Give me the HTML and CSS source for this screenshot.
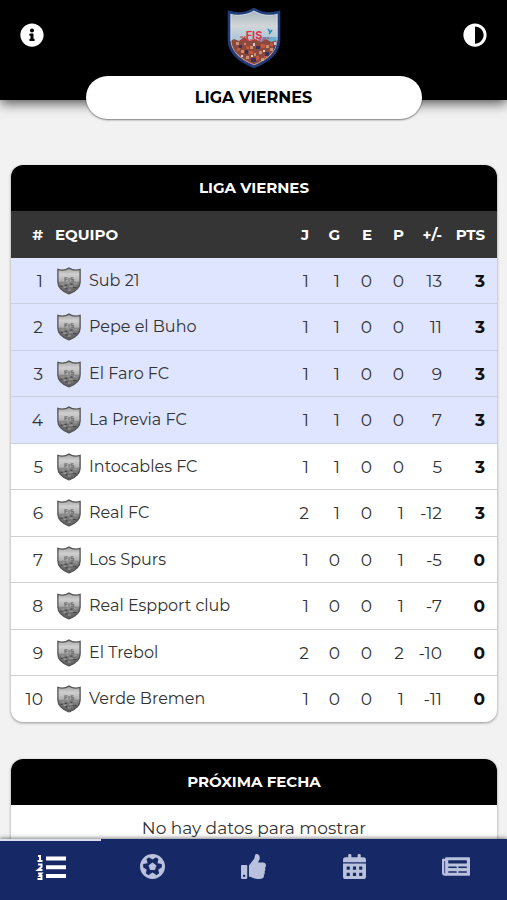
FILE: index.html
```html
<!DOCTYPE html>
<html lang="es">
<head>
<meta charset="utf-8">
<meta name="viewport" content="width=device-width, initial-scale=1">
<title>Liga Viernes</title>
<link rel="stylesheet" href="styles.css">
</head>
<body>
<svg class="defs" aria-hidden="true">
  <defs>
    <linearGradient id="sky" x1="0" y1="0" x2="0" y2="1">
      <stop offset="0" stop-color="#9fb1bb"/>
      <stop offset=".3" stop-color="#d0d5d8"/>
      <stop offset=".5" stop-color="#b0c9d6"/>
    </linearGradient>
    <linearGradient id="mono" x1="0" y1="0" x2="0" y2="1">
      <stop offset="0" stop-color="#a2a2a2"/>
      <stop offset=".25" stop-color="#cfcfcf"/>
      <stop offset=".5" stop-color="#b0b0b0"/>
      <stop offset=".56" stop-color="#858585"/>
      <stop offset="1" stop-color="#5c5c5c"/>
    </linearGradient>
    <clipPath id="shield-clip"><path d="M2 4Q16 8 27 1Q38 8 52 4V32C52 45 42 53 27 59C12 53 2 45 2 32Z"/></clipPath>
    <symbol id="crest" viewBox="0 0 54 60">
      <g clip-path="url(#shield-clip)">
        <path fill="url(#sky)" d="M0 0h54v60H0z"/>
        <path fill="#6aaed0" d="M32 29h20v5H32z"/>
        <path fill="#8c4a3c" d="M2 34l5-3 5 2 5-4 6 4 5-2 6 3 5-3 5 3 7-2v29H2z"/>
        <path fill="#3b2f5c" d="M2 36l5 6 4 8 7 8H2zM48 35l4-1v14l-8 8zM18 42h3v4h-3zM29 38h4v3h-4zM38 44h4v4h-4zM24 50h5v4h-5zM12 37h3v3h-3z"/>
        <path fill="#c98f74" d="M9 34h3v3H9zM14 42h3v3h-3zM23 38h3v3h-3zM32 43h3v3h-3zM39 37h3v3h-3zM19 48h3v3h-3zM34 50h3v3h-3zM43 40h3v3h-3zM27 45h2v3h-2zM17 35h2v2h-2z"/>
        <path fill="#c4583c" d="M19 38h3v3h-3zM34 36h4v4h-4zM22 43h4v3h-4zM29 48h3v4h-3zM10 40h3v3h-3zM37 48h3v2h-3zM43 35h3v3h-3z"/>
        <path fill="#d5cdd2" d="M26 35h2v3h-2zM36 42h2v2h-2zM24 47h2v2h-2zM47 34h2v3h-2zM14 47h2v2h-2z"/>
        <path stroke="#2987ba" stroke-width="1.500" fill="none" d="M41 21l2 3m2-2l-3 4"/>
        <path stroke="#d4324b" stroke-opacity=".7" stroke-width="1.500" fill="none" d="M13 29h6M36 30h6M15 32h24" stroke-dasharray="3 1"/>
      </g>
      <text class="crest-text" x="27" y="31" text-anchor="middle">FIS</text>
      <path fill="none" stroke="#dce1ec" stroke-opacity=".6" d="M4 6Q16 10 27 3Q38 10 50 6V32C50 44 40 51 27 57C14 51 4 44 4 32Z"/>
      <path fill="none" stroke="#213c7c" stroke-width="2.500" d="M2 4Q16 8 27 1Q38 8 52 4V32C52 45 42 53 27 59C12 53 2 45 2 32Z"/>
    </symbol>
    <symbol id="crest-mono" viewBox="0 0 54 60">
      <path fill="url(#mono)" d="M2 4Q16 8 27 1Q38 8 52 4V32C52 45 42 53 27 59C12 53 2 45 2 32Z"/>
      <path fill="none" stroke="#777" stroke-width="3" d="M18 31v-8h6M18 27h5M27 23v8M37 23h-5v4h5v4h-6"/>
      <path fill="none" stroke="#979797" stroke-width="3" d="M10 37h7M22 35h5M38 36h7M15 44h5M27 42h8M24 50h7"/>
      <path fill="none" stroke="#484848" stroke-width="3" d="M8 42h5M17 40h6M30 37h5M36 45h8M19 48h5"/>
      <path fill="none" stroke="#555" stroke-width="3" d="M2 4Q16 8 27 1Q38 8 52 4V32C52 45 42 53 27 59C12 53 2 45 2 32Z"/>
    </symbol>
  </defs>
</svg>

<header class="topbar">
  <div class="topbar-row">
    <button class="icon-button" type="button" aria-label="Información">
      <svg viewBox="0 0 512 512"><path d="M256 8C119 8 8 119 8 256s111 248 248 248 248-111 248-248S393 8 256 8zm0 110c23 0 42 19 42 42s-19 42-42 42-42-19-42-42 19-42 42-42zm56 254c0 7-5 12-12 12h-88c-7 0-12-5-12-12v-24c0-7 5-12 12-12h12v-64h-12c-7 0-12-5-12-12v-24c0-7 5-12 12-12h64c7 0 12 5 12 12v100h12c7 0 12 5 12 12z"/></svg>
    </button>
    <svg class="logo" role="img" aria-label="FIS"><use href="#crest"/></svg>
    <button class="icon-button" type="button" aria-label="Cambiar contraste">
      <svg viewBox="0 0 512 512"><path d="M8 256c0 137 111 248 248 248s248-111 248-248S393 8 256 8 8 119 8 256zm248 184V72c102 0 184 82 184 184 0 102-82 184-184 184z"/></svg>
    </button>
  </div>
  <h1 class="pill">LIGA VIERNES</h1>
</header>

<main class="content">
  <section class="card">
    <h2 class="card-title">LIGA VIERNES</h2>
    <table class="standings">
      <thead>
        <tr><th class="rank">#</th><th class="team">EQUIPO</th><th class="played">J</th><th class="stat won">G</th><th class="stat">E</th><th class="stat">P</th><th class="diff">+/-</th><th class="points">PTS</th></tr>
      </thead>
      <tbody>
        <tr class="qualified"><td>1</td><td class="team"><span class="club"><svg class="badge" aria-hidden="true"><use href="#crest-mono"/></svg>Sub 21</span></td><td>1</td><td>1</td><td>0</td><td>0</td><td>13</td><td class="points">3</td></tr>
        <tr class="qualified"><td>2</td><td class="team"><span class="club"><svg class="badge" aria-hidden="true"><use href="#crest-mono"/></svg>Pepe el Buho</span></td><td>1</td><td>1</td><td>0</td><td>0</td><td>11</td><td class="points">3</td></tr>
        <tr class="qualified"><td>3</td><td class="team"><span class="club"><svg class="badge" aria-hidden="true"><use href="#crest-mono"/></svg>El Faro FC</span></td><td>1</td><td>1</td><td>0</td><td>0</td><td>9</td><td class="points">3</td></tr>
        <tr class="qualified"><td>4</td><td class="team"><span class="club"><svg class="badge" aria-hidden="true"><use href="#crest-mono"/></svg>La Previa FC</span></td><td>1</td><td>1</td><td>0</td><td>0</td><td>7</td><td class="points">3</td></tr>
        <tr><td>5</td><td class="team"><span class="club"><svg class="badge" aria-hidden="true"><use href="#crest-mono"/></svg>Intocables FC</span></td><td>1</td><td>1</td><td>0</td><td>0</td><td>5</td><td class="points">3</td></tr>
        <tr><td>6</td><td class="team"><span class="club"><svg class="badge" aria-hidden="true"><use href="#crest-mono"/></svg>Real FC</span></td><td>2</td><td>1</td><td>0</td><td>1</td><td>-12</td><td class="points">3</td></tr>
        <tr><td>7</td><td class="team"><span class="club"><svg class="badge" aria-hidden="true"><use href="#crest-mono"/></svg>Los Spurs</span></td><td>1</td><td>0</td><td>0</td><td>1</td><td>-5</td><td class="points">0</td></tr>
        <tr><td>8</td><td class="team"><span class="club"><svg class="badge" aria-hidden="true"><use href="#crest-mono"/></svg>Real Espport club</span></td><td>1</td><td>0</td><td>0</td><td>1</td><td>-7</td><td class="points">0</td></tr>
        <tr><td>9</td><td class="team"><span class="club"><svg class="badge" aria-hidden="true"><use href="#crest-mono"/></svg>El Trebol</span></td><td>2</td><td>0</td><td>0</td><td>2</td><td>-10</td><td class="points">0</td></tr>
        <tr><td>10</td><td class="team"><span class="club"><svg class="badge" aria-hidden="true"><use href="#crest-mono"/></svg>Verde Bremen</span></td><td>1</td><td>0</td><td>0</td><td>1</td><td>-11</td><td class="points">0</td></tr>
      </tbody>
    </table>
  </section>

  <section class="card">
    <h2 class="card-title">PRÓXIMA FECHA</h2>
    <p class="empty">No hay datos para mostrar</p>
  </section>
</main>

<nav class="tabs">
  <a class="tab active" href="#posiciones" aria-label="Posiciones">
    <svg class="list" viewBox="0 0 32 28">
      <path d="M11 3.500h20v4H11zM11 12.200h20v4H11zM11 21h20v4H11z"/>
      <path fill="none" stroke="currentColor" stroke-width="2" d="M3 3h2v5M2.500 8h5M3 11.500h3.500v2.500l-3.500 3h4.500M3 20.500h3.500l-2 2.500h2v3H2.500"/>
    </svg>
  </a>
  <a class="tab" href="#fixture" aria-label="Fixture">
    <svg viewBox="0 0 24 24">
      <circle cx="12" cy="12" r="10.800" fill="none" stroke="currentColor" stroke-width="2.400"/>
      <path fill-rule="evenodd" d="M12 1A11 11 0 1 0 12 23A11 11 0 1 0 12 1ZM12 5.300L8.500 3.200L6.300 4.800L7.200 8.800L3.100 9.500L3 12.700L6.500 15L5.500 18.500L8 20.500L12 17.800L16 20.500L18.500 18.500L17.500 15L21 12.700L20.900 9.500L16.800 8.800L17.700 4.800L15.500 3.200Z"/>
      <path d="M12 8.200l3.800 2.800-1.500 4.400H9.700L8.200 11z"/>
    </svg>
  </a>
  <a class="tab" href="#votar" aria-label="Votar">
    <svg viewBox="0 0 512 512"><path d="M104 224H24c-13.300 0-24 10.700-24 24v240c0 13.300 10.700 24 24 24h80c13.300 0 24-10.700 24-24V248c0-13.300-10.700-24-24-24zM64 472c-13.300 0-24-10.700-24-24s10.700-24 24-24 24 10.700 24 24-10.700 24-24 24zM384 81.500c0 42.400-26 66.200-33.300 94.500h101.700c33.400 0 59.400 27.700 59.600 58.100.1 18-7.600 37.200-19.400 49.200l-.1.100c9.800 23.300 8.200 56-9.300 79.500 8.700 25.900-.1 57.700-16.400 74.800 4.300 17.600 2.200 32.600-6.100 44.600-20.200 29-70.200 29.400-112.600 29.400h-2.800c-47.800 0-87-17.400-118.400-31.400-15.800-7-36.500-15.800-52.200-16-6.500-.1-11.800-5.500-11.800-12V238.500c0-3.200 1.300-6.300 3.600-8.500 39.200-38.800 56.100-79.900 88.300-112.100 14.700-14.700 20-36.900 25.200-58.300C284.400 41.200 293.600 0 312 0c24 0 72 8 72 81.500z"/></svg>
  </a>
  <a class="tab" href="#calendario" aria-label="Calendario">
    <svg viewBox="0 0 24 24"><path d="M1 8V5.500Q1 3 3.500 3H6V1Q6 0 7 0h1Q9 0 9 1v2h6V1Q15 0 16 0h1q1 0 1 1v2h2.500Q23 3 23 5.500V8z"/><path fill-rule="evenodd" d="M1 9h22v12.500Q23 24 20.500 24h-17Q1 24 1 21.500zM4.500 12v3h3v-3zM10.500 12v3h3v-3zM16.500 12v3h3v-3zM4.500 18v3h3v-3zM10.500 18v3h3v-3zM16.500 18v3h3v-3z"/></svg>
  </a>
  <a class="tab" href="#noticias" aria-label="Noticias">
    <svg class="news" viewBox="0 0 576 512"><path d="M552 64H88c-13.300 0-24 10.700-24 24v8H24c-13.300 0-24 10.700-24 24v272c0 30.900 25.100 56 56 56h496c13.300 0 24-10.700 24-24V88c0-13.300-10.700-24-24-24zM56 400c-4.400 0-8-3.600-8-8V144h16v248c0 4.400-3.600 8-8 8zm236-16H140c-6.600 0-12-5.400-12-12v-8c0-6.600 5.400-12 12-12h152c6.600 0 12 5.400 12 12v8c0 6.600-5.400 12-12 12zm208 0H348c-6.600 0-12-5.400-12-12v-8c0-6.600 5.400-12 12-12h152c6.600 0 12 5.400 12 12v8c0 6.600-5.400 12-12 12zM292 288H140c-6.600 0-12-5.400-12-12v-8c0-6.600 5.400-12 12-12h152c6.600 0 12 5.400 12 12v8c0 6.600-5.400 12-12 12zm208 0H348c-6.600 0-12-5.400-12-12v-8c0-6.600 5.400-12 12-12h152c6.600 0 12 5.400 12 12v8c0 6.600-5.400 12-12 12zm0-96H140c-6.600 0-12-5.400-12-12v-40c0-6.600 5.400-12 12-12h360c6.600 0 12 5.400 12 12v40c0 6.600-5.400 12-12 12z"/></svg>
  </a>
</nav>
</body>
</html>
```
FILE: styles.css
```css
* {
  box-sizing: border-box;
}

body {
  margin: 0;
  height: 100vh;
  display: flex;
  flex-direction: column;
  overflow: hidden;
  background: #f2f2f2;
  color: #333;
  font-family: Montserrat, Inter, sans-serif;
  font-size: 17px;
  line-height: 24px;
}

h1,
h2,
p {
  margin: 0;
}

.defs {
  position: absolute;
  width: 0;
  height: 0;
}

.crest-text {
  font-family: Inter, sans-serif;
  font-size: 11px;
  font-weight: 700;
  fill: #dc3548;
}

/* Header */

.topbar {
  flex: none;
  z-index: 1;
  height: 100px;
  background: #000;
  box-shadow: 0 3px 12px rgba(0, 0, 0, 0.7);
}

.topbar-row {
  display: flex;
  justify-content: space-between;
  align-items: flex-start;
  padding: 8px 20px 0;
}

.icon-button {
  margin: 15px 0 0;
  padding: 0;
  border: 0;
  background: none;
  color: #fff;
  width: 24px;
  height: 24px;
}

.icon-button svg {
  display: block;
  width: 24px;
  height: 24px;
  fill: currentColor;
}

.logo {
  width: 54px;
  height: 60px;
}

.pill {
  width: 336px;
  max-width: 80%;
  margin: 8px auto 0;
  border-radius: 22px;
  background: #fff;
  color: #000;
  box-shadow: 0 1px 2px rgba(0, 0, 0, 0.5);
  font-size: 16px;
  font-weight: 700;
  line-height: 43px;
  text-align: center;
}

/* Cards */

.content {
  flex: 1;
  min-height: 0;
  overflow-y: auto;
  scrollbar-width: none;
  display: flex;
  flex-direction: column;
  gap: 37px;
  padding: 65px 10px 24px 11px;
}

.card {
  flex: none;
  overflow: hidden;
  border-radius: 12px;
  background: #fff;
  box-shadow: 0 1px 3px rgba(0, 0, 0, 0.4);
}

.card-title {
  background: #000;
  color: #fff;
  font-size: 15px;
  font-weight: 700;
  line-height: 46px;
  text-align: center;
}

.standings {
  width: 100%;
  table-layout: fixed;
  border-collapse: separate;
  border-spacing: 0;
}

.standings th,
.standings td {
  height: 46px;
  padding: 0 4px 0 0;
  text-align: right;
  font-weight: 400;
}

.standings th {
  height: 47px;
  background: #353535;
  color: #fff;
  font-size: 15px;
  font-weight: 700;
}

.standings td {
  border-bottom: 1px solid #d0d0d0;
}

.standings tbody tr:nth-child(even) td {
  height: 47px;
}

.standings tbody tr:last-child td {
  height: 46px;
  border-bottom: 0;
}

.standings .team {
  padding-left: 8px;
  font-size: 16px;
  text-align: left;
}

.standings th.team {
  font-size: 15px;
}

.standings .points {
  padding-right: 12px;
}

.standings td.points {
  color: #111;
  font-weight: 700;
}

.rank {
  width: 36px;
}

.played {
  width: 40px;
}

.stat {
  width: 32px;
}

.stat.won {
  width: 31px;
}

.diff {
  width: 38px;
}

.standings th.points {
  width: 51px;
}

.standings .qualified td {
  background: #dfe5ff;
  border-bottom-color: #c8cfe0;
}

.club {
  display: flex;
  align-items: center;
  gap: 8px;
  white-space: nowrap;
}

.badge {
  flex: none;
  width: 24px;
  height: 28px;
  margin-left: 2px;
}

.empty {
  padding: 11px 12px;
  text-align: center;
}

/* Bottom navigation */

.tabs {
  flex: none;
  z-index: 1;
  display: flex;
  height: 61px;
  background: #172867;
  box-shadow: 0 -1px 4px rgba(0, 0, 0, 0.5);
}

.tab {
  flex: 1;
  display: flex;
  justify-content: center;
  align-items: center;
  padding-bottom: 8px;
  border-top: 2px solid transparent;
  color: #bac1dc;
}

.tab.active {
  border-top-color: #dcdff0;
  color: #fff;
}

.tab svg {
  width: 25px;
  height: 25px;
  fill: currentColor;
}

.tab .list {
  width: 32px;
  height: 28px;
}

.tab .news {
  width: 28px;
}
```
